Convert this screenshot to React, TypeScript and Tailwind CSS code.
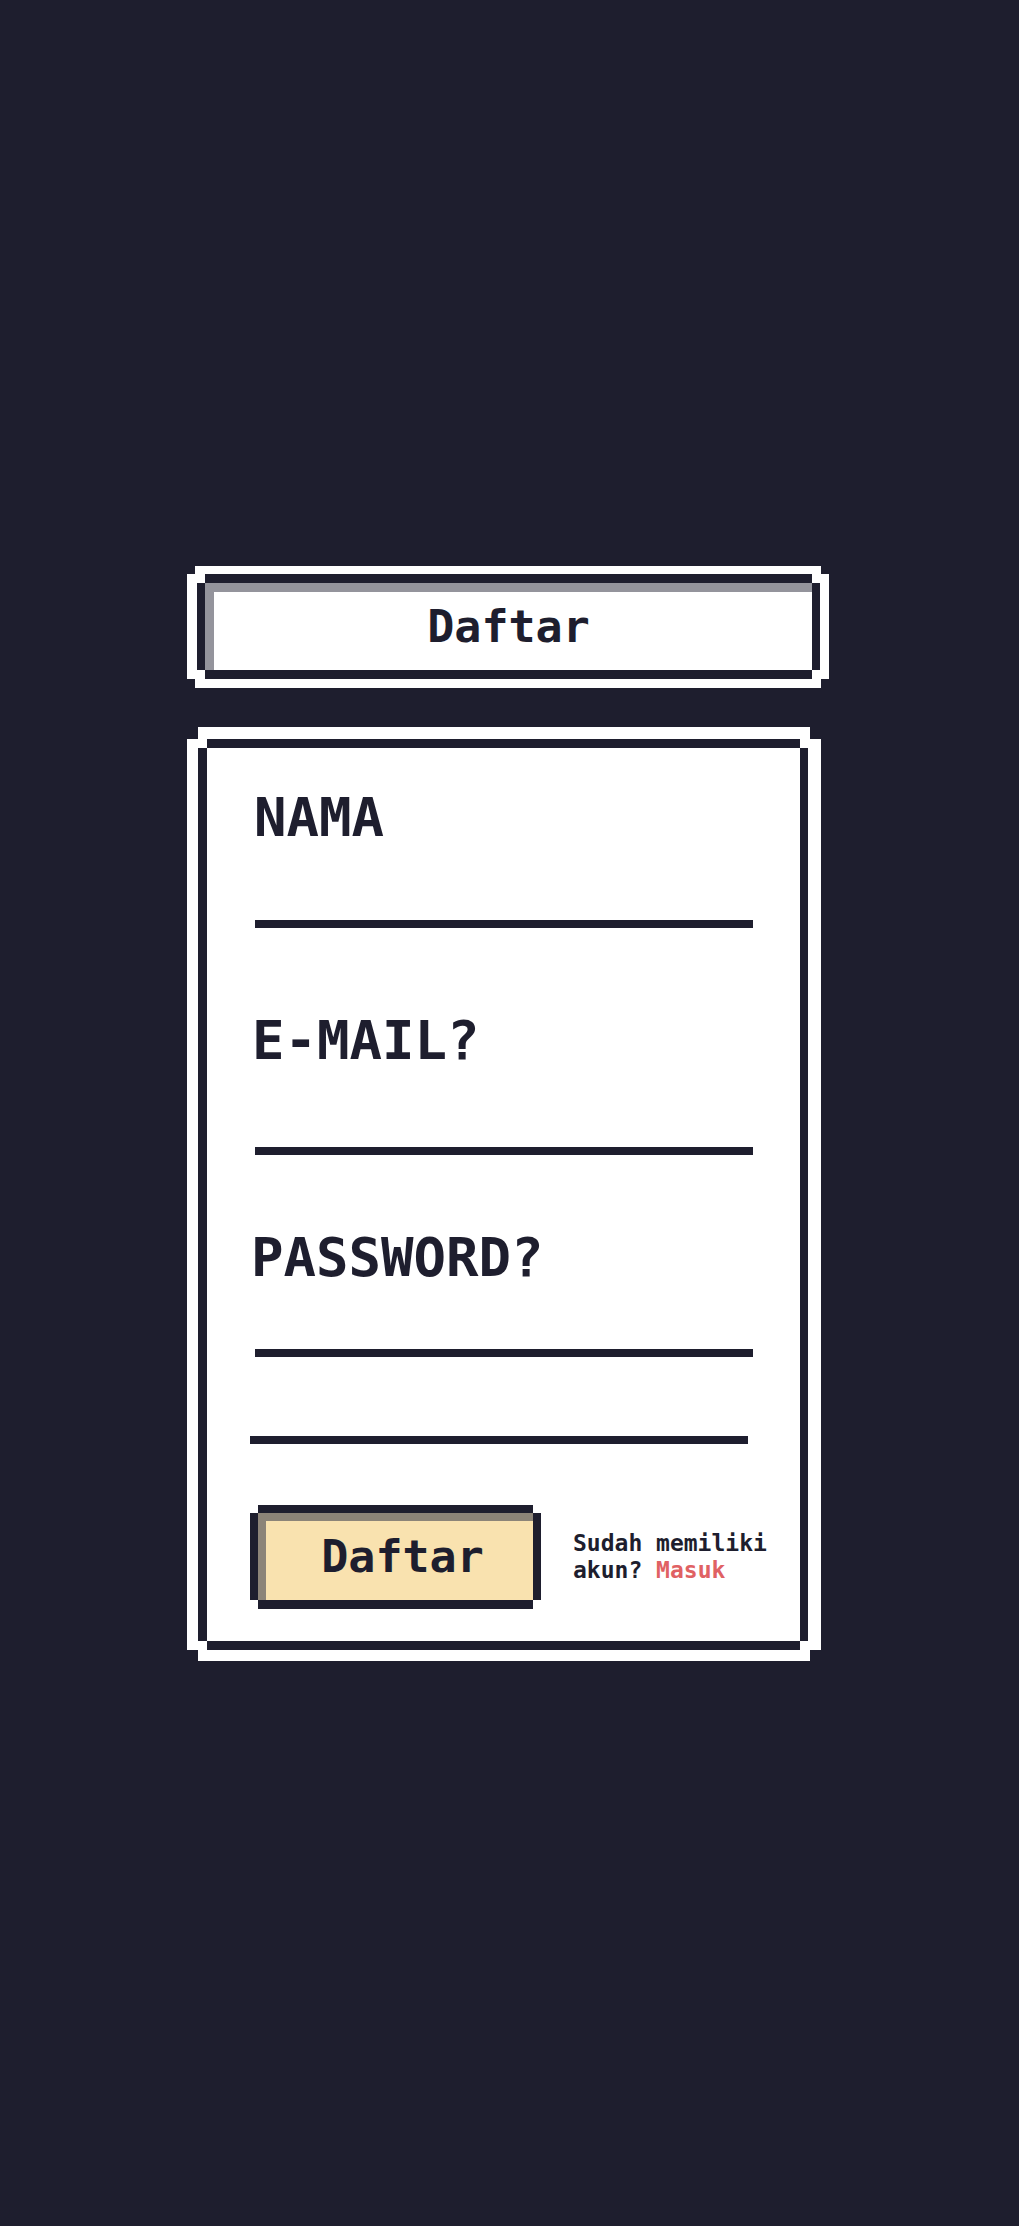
import React from "react";

export default function App() {
  return (
    <div className="min-h-screen bg-[#1e1e2e] flex items-center justify-center font-['DejaVu_Sans_Mono',monospace] text-[#1e1e2e]">
      <div className="mr-[3px] flex w-[642px] flex-col items-start">
        {/* Header box */}
        <div className="w-full">
          <div className="mx-[8px] border-t-[8px] border-b-[9px] border-white">
            <div className="-mx-[8px] border-l-[10px] border-r-[9px] border-white bg-white">
              <div className="mx-[8px] border-y-[9px] border-[#1e1e2e]">
                <div className="-mx-[8px] flex h-[87px] items-center justify-center border-x-[8px] border-[#1e1e2e] bg-white shadow-[inset_9px_9px_0_0_#94949c]">
                  <h1 className="text-[45px] font-bold leading-none">Daftar</h1>
                </div>
              </div>
            </div>
          </div>
        </div>

        {/* Form card */}
        <div className="mt-[39px] w-[634px]">
          <div className="mx-[11px] border-t-[12px] border-b-[11px] border-white">
            <div className="-mx-[11px] border-l-[11px] border-r-[13px] border-white bg-white">
              <div className="ml-[9px] mr-[8px] border-y-[9px] border-[#1e1e2e]">
                <form
                  className="-ml-[9px] -mr-[8px] h-[893px] border-l-[9px] border-r-[8px] border-[#1e1e2e] bg-white pl-[48px] pr-[47px] pt-[42px]"
                  onSubmit={(e) => e.preventDefault()}
                >
                  <label className="-ml-[1px] block h-[55px] text-[54px] font-bold leading-[55px]">NAMA</label>
                  <input
                    type="text"
                    className="block h-[83px] w-full border-b-[8px] border-[#1e1e2e] bg-transparent outline-none"
                  />

                  <label className="-ml-[3px] mt-[85px] block h-[55px] text-[54px] font-bold leading-[55px]">E-MAIL?</label>
                  <input
                    type="email"
                    className="block h-[87px] w-full border-b-[8px] border-[#1e1e2e] bg-transparent outline-none"
                  />

                  <label className="-ml-[4px] mt-[75px] block h-[55px] text-[54px] font-bold leading-[55px]">PASSWORD?</label>
                  <input
                    type="password"
                    className="block h-[72px] w-full border-b-[8px] border-[#1e1e2e] bg-transparent outline-none"
                  />
                  <input
                    type="password"
                    className="-ml-[5px] block h-[87px] w-[498px] border-b-[8px] border-[#1e1e2e] bg-transparent outline-none"
                  />

                  <div className="-ml-[5px] mt-[61px] flex items-center gap-[32px]">
                    <button type="submit" className="w-[291px] shrink-0 text-[#1e1e2e]">
                      <div className="mx-[8px] border-t-[8px] border-b-[9px] border-[#1e1e2e]">
                        <div className="-mx-[8px] flex h-[87px] items-center justify-center border-x-[8px] border-[#1e1e2e] bg-[#f9e2af] pl-[14px] shadow-[inset_8px_8px_0_0_#8c8478]">
                          <span className="text-[45px] font-bold leading-none">Daftar</span>
                        </div>
                      </div>
                    </button>
                    <p className="whitespace-nowrap text-[23px] font-bold leading-[27px]">
                      Sudah memiliki
                      <br />
                      akun? <span className="text-[#e06163]">Masuk</span>
                    </p>
                  </div>
                </form>
              </div>
            </div>
          </div>
        </div>
      </div>
    </div>
  );
}
